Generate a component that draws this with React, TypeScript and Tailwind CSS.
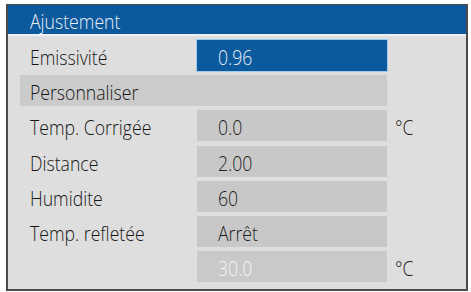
import React from "react";

const font = { fontFamily: '"Open Sans", "Noto Sans", sans-serif' };

function T({ children }: { children?: React.ReactNode }) {
  return <span className="inline-block origin-left scale-x-[0.84] whitespace-nowrap translate-y-[2px]">{children}</span>;
}

function Row({ label, value, unit, variant = "gray" }: { label?: string; value: string; unit?: string; variant?: "gray" | "blue" | "disabled" }) {
  const box =
    variant === "blue"
      ? "bg-[#0b5a9e] text-[#e4f0fb] ring-1 ring-[#9fcbee]"
      : variant === "disabled"
      ? "bg-[#c9c9c9] text-[#f4f4f4]"
      : "bg-[#c8c8c8] text-[#1e1e1e]";
  return (
    <div className="flex h-[31px] items-stretch">
      <div className="w-[189px] pl-[22px] flex items-center text-[#161616]"><T>{label}</T></div>
      <div className={`w-[190px] pl-[21px] flex items-center ${box}`}><T>{value}</T></div>
      <div className="pl-[8px] flex items-center text-[#222]"><T>{unit}</T></div>
    </div>
  );
}

export default function App() {
  return (
    <div className="w-[471px] h-[292px] bg-white pl-[6px] pt-[4px]" style={font}>
      <div className="w-[462px] h-[287px] border-2 border-[#4a4a4a] border-t-[1px] bg-[#dedede] flex flex-col text-[21px] font-light leading-none">
        <div className="h-[31px] bg-[#0c5a9d] text-[#e8f2fc] pl-[22px] flex items-center border-b-2 border-[#eef2f5]">
          <T>Ajustement</T>
        </div>
        <div className="flex flex-col gap-[4.2px] pt-[4px]">
          <Row label="Emissivité" value="0.96" variant="blue" />
          <div className="flex h-[31px]">
            <div className="ml-[12px] w-[367px] bg-[#cbcbcb] pl-[10px] flex items-center text-[#161616]"><T>Personnaliser</T></div>
          </div>
          <Row label="Temp. Corrigée" value="0.0" unit="°C" />
          <Row label="Distance" value="2.00" />
          <Row label="Humidite" value="60" />
          <Row label="Temp. refletée" value="Arrêt" />
          <Row value="30.0" unit="°C" variant="disabled" />
        </div>
      </div>
    </div>
  );
}
